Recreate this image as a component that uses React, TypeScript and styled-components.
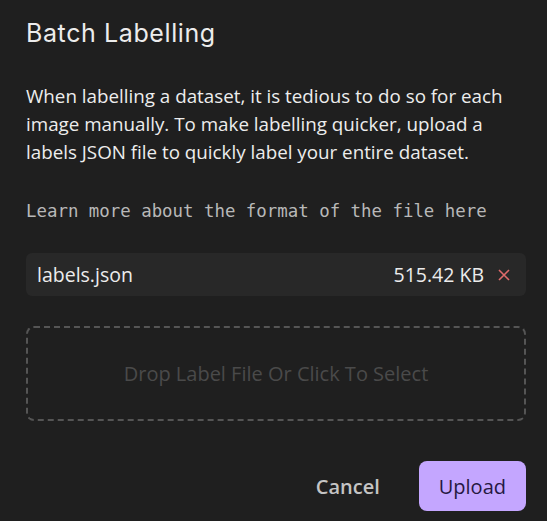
import React from "react";
import styled, { createGlobalStyle } from "styled-components";

const Global = createGlobalStyle`
  html, body { margin: 0; padding: 0; background: #1f1f1f; }
  * { box-sizing: border-box; }
`;

const Dialog = styled.div`
  width: 547px;
  height: 521px;
  background: #1f1f1f;
  padding: 16px 21px 10px 26px;
  display: flex;
  flex-direction: column;
  font-family: "Open Sans", sans-serif;
  color: #e8e8e8;
`;

const Title = styled.h1`
  margin: 0;
  font-family: "Inter", "Noto Sans", sans-serif;
  font-weight: 400;
  font-size: 25px;
  line-height: 34px;
  letter-spacing: 0.6px;
  color: #ececec;
`;

const Description = styled.p`
  margin: 32px 0 0 0;
  font-size: 18.8px;
  line-height: 28px;
  color: #ededed;
`;

const MonoNote = styled.p`
  margin: 33px 0 0 0;
  font-family: "DejaVu Sans Mono", monospace;
  font-size: 17.4px;
  line-height: 24px;
  color: #b8b8b8;
`;

const FileRow = styled.div`
  margin-top: 30px;
  height: 43px;
  background: #282828;
  border-radius: 6px;
  display: flex;
  align-items: center;
  padding: 0 16px 0 11px;
  font-size: 19.5px;
`;

const FileName = styled.span`
  flex: 1;
  color: #ececec;
`;

const FileSize = styled.span`
  color: #ececec;
  margin-right: 14px;
`;

const RemoveButton = styled.button`
  background: none;
  border: none;
  padding: 0;
  display: flex;
  color: #e06a6a;
  cursor: pointer;
`;

const DropZone = styled.div`
  margin-top: 30px;
  height: 95px;
  border: 2px dashed #555;
  border-radius: 8px;
  display: flex;
  align-items: center;
  justify-content: center;
  font-size: 20px;
  color: #4a4a4a;
`;

const Footer = styled.div`
  margin-top: auto;
  display: flex;
  justify-content: flex-end;
  align-items: center;
  gap: 19px;
`;

const Button = styled.button<{ $primary?: boolean }>`
  font-family: "Open Sans", sans-serif;
  font-size: 20px;
  font-weight: ${(p) => (p.$primary ? 500 : 600)};
  border: none;
  border-radius: 8px;
  height: 50px;
  padding: 0 20px;
  cursor: pointer;
  background: ${(p) => (p.$primary ? "#c4a6ff" : "transparent")};
  color: ${(p) => (p.$primary ? "#261842" : "#c4c4c4")};
`;

export default function App() {
  return (
    <>
      <Global />
      <Dialog>
        <Title>Batch Labelling</Title>
        <Description>
          When labelling a dataset, it is tedious to do so for each image
          manually. To make labelling quicker, upload a labels JSON file to
          quickly label your entire dataset.
        </Description>
        <MonoNote>Learn more about the format of the file here</MonoNote>
        <FileRow>
          <FileName>labels.json</FileName>
          <FileSize>515.42 KB</FileSize>
          <RemoveButton aria-label="Remove">
            <svg width="12" height="12" viewBox="0 0 12 12">
              <path d="M1 1 L11 11 M11 1 L1 11" stroke="currentColor" strokeWidth="1.6" />
            </svg>
          </RemoveButton>
        </FileRow>
        <DropZone>Drop Label File Or Click To Select</DropZone>
        <Footer>
          <Button>Cancel</Button>
          <Button $primary>Upload</Button>
        </Footer>
      </Dialog>
    </>
  );
}
